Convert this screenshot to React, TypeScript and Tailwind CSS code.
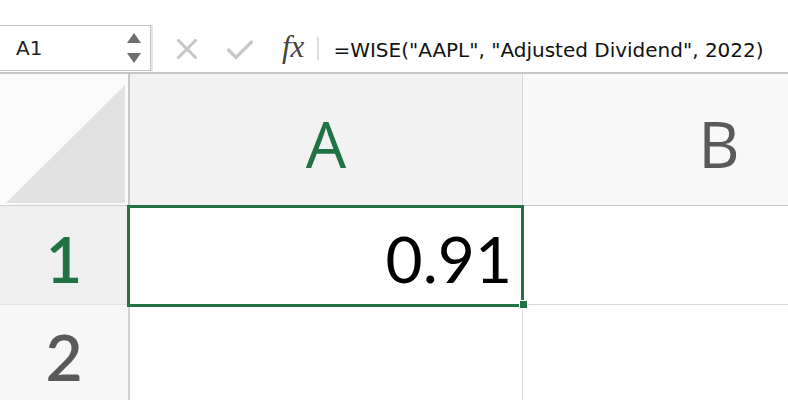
import React from "react";

export default function App() {
  return (
    <div className="relative w-[788px] h-[415px] bg-white overflow-hidden font-['Open_Sans',sans-serif]">
      <div className="h-[25px]" />
      {/* Formula bar */}
      <div className="flex h-[47px] items-stretch">
        <div className="w-[151px] shrink-0 h-[46px] border-t border-r border-b border-[#c4c4c4] flex items-center justify-between pl-[16px] pr-[9px] shadow-[2px_0_0_#e6e6e6]">
          <span className="font-['DejaVu_Sans',sans-serif] text-[20px] text-[#222] leading-none">A1</span>
          <svg width="14" height="31" viewBox="0 0 14 31">
            <polygon points="7,0 14,10 0,10" fill="#6e6e6e" />
            <polygon points="0,20 14,20 7,30" fill="#6e6e6e" />
          </svg>
        </div>
        <div className="flex items-center flex-1 min-w-0">
          <svg className="ml-[26px]" width="20" height="20" viewBox="0 0 20 20">
            <path d="M1.5 1.5 L18.5 18.5 M18.5 1.5 L1.5 18.5" stroke="#c6c6c6" strokeWidth="3" strokeLinecap="round" />
          </svg>
          <svg className="ml-[30px] mt-[2px]" width="26" height="20" viewBox="0 0 26 20">
            <path d="M1.5 10 L9 17.5 L24.5 2" stroke="#c8c8c8" strokeWidth="3.2" fill="none" strokeLinecap="round" strokeLinejoin="round" />
          </svg>
          <span className="ml-[29px] font-['Liberation_Serif',serif] italic text-[31px] leading-none text-[#444] -mt-[4px]">fx</span>
          <div className="ml-[13px] w-[2px] h-[23px] bg-[#dcdcdc]" />
          <span className="ml-[14px] font-['DejaVu_Sans',sans-serif] text-[20px] leading-none text-[#111] whitespace-nowrap mt-[2px]">
            =WISE("AAPL", "Adjusted Dividend", 2022)
          </span>
        </div>
      </div>
      <div className="h-[2px] bg-[#c6c6c6]" />
      {/* Column headers */}
      <div className="flex h-[132px]">
        <div className="w-[128px] shrink-0 bg-[#fafafa] border-b border-[#d0d0d0] flex items-end justify-end pr-[3px] pb-[2px]">
          <svg width="119" height="118" viewBox="0 0 119 118">
            <polygon points="0,118 119,0 119,118" fill="#e2e2e2" />
          </svg>
        </div>
        <div className="w-[2px] shrink-0 bg-[#c8c8c8]" />
        <div className="w-[392px] shrink-0 bg-[#f2f2f2] flex items-center justify-center pt-[8px]">
          <span className="text-[64px] font-medium leading-none text-[#217346]">A</span>
        </div>
        <div className="w-[1px] shrink-0 bg-[#d8d8d8]" />
        <div className="w-[392px] shrink-0 bg-[#f8f8f8] border-b border-[#c8c8c8] flex items-center justify-center pt-[8px]">
          <span className="text-[64px] font-medium leading-none text-[#5a5a5a]">B</span>
        </div>
      </div>
      {/* Row 1 */}
      <div className="flex h-[99px]">
        <div className="w-[128px] shrink-0 bg-[#efefef] border-b border-[#e2e2e2] flex items-center justify-center pt-[6px]">
          <span className="font-['Lato',sans-serif] font-semibold text-[63px] leading-none text-[#217346]">1</span>
        </div>
        <div className="w-[2px] shrink-0 bg-[#c8c8c8]" />
        <div className="w-[392px] shrink-0 bg-white flex items-center justify-end pr-[10px] pt-[6px]">
          <span className="font-['Lato',sans-serif] text-[64px] leading-none text-black">0.91</span>
        </div>
        <div className="w-[1px] shrink-0 bg-[#d8d8d8]" />
        <div className="w-[392px] shrink-0 bg-white border-b border-[#d8d8d8]" />
      </div>
      {/* Row 2 */}
      <div className="flex h-[95px]">
        <div className="w-[128px] shrink-0 bg-[#f7f7f7] flex items-center justify-center pt-[8px]">
          <span className="font-['Lato',sans-serif] font-semibold text-[64px] leading-none text-[#5a5a5a]">2</span>
        </div>
        <div className="w-[2px] shrink-0 bg-[#d0d0d0]" />
        <div className="w-[392px] shrink-0 bg-white" />
        <div className="w-[1px] shrink-0 bg-[#d8d8d8]" />
        <div className="w-[392px] shrink-0 bg-white" />
      </div>
      {/* Selection */}
      <div className="absolute left-[127px] top-[205px] w-[397px] h-[102px] border-[3px] border-[#217346] pointer-events-none" />
      <div className="absolute left-[519px] top-[300px] w-[9px] h-[9px] bg-[#217346] border border-white" />
    </div>
  );
}
